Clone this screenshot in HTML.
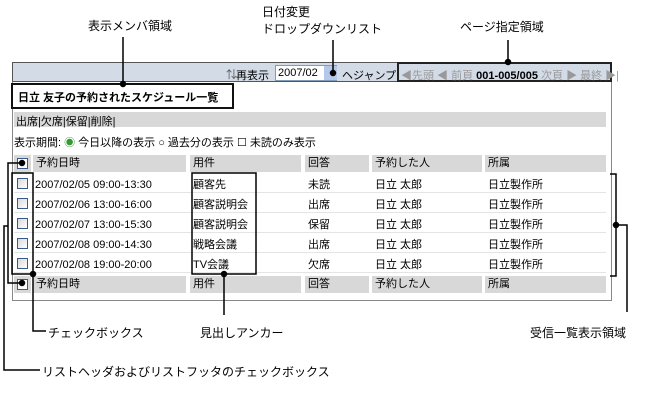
<!DOCTYPE html>
<html><head><meta charset="utf-8"><style>
*{margin:0;padding:0;box-sizing:border-box}
body{width:663px;height:401px;background:#fff;position:relative;overflow:hidden;font-family:"Liberation Sans","Noto Sans CJK JP",sans-serif;font-size:11px;color:#000}
.a{position:absolute;white-space:nowrap}
.g{background:#d8d8d8}
.row{position:absolute;left:14px;width:592px;height:19px;border-bottom:1px solid #e4e4e4}
.cb{position:absolute;width:11px;height:11px;border:1px solid #3a5a8a;background:linear-gradient(135deg,#d8d8d8,#fff)}
.hc{position:absolute;height:17px;background:#d8d8d8;line-height:17px;padding-left:3px}
</style></head><body>
<div class="a" style="left:88px;top:17px;font-size:12px">表示メンバ領域</div>
<div class="a" style="left:262px;top:3px;font-size:12px">日付変更</div>
<div class="a" style="left:262px;top:20px;font-size:12px">ドロップダウンリスト</div>
<div class="a" style="left:460px;top:18px;font-size:12px">ページ指定領域</div>

<div class="a" style="left:12px;top:62px;width:600px;height:239px;border:1px solid #888;border-top:1px solid #555"></div>
<div class="a" style="left:12px;top:62px;width:600px;height:20px;background:#d3dbe6;border:1px solid #555"></div>
<div class="a" style="left:226px;top:66px;color:#555">⇅</div>
<div class="a" style="left:236px;top:67px">再表示</div>
<div class="a" style="left:275px;top:65px;width:62px;height:16px;border:1px solid #7f9db9;background:#fff;padding-left:2px;line-height:14px">2007/02</div>
<div class="a" style="left:324px;top:66px;width:13px;height:14px;background:#b5c8ea"></div>
<div class="a" style="left:342px;top:67px">ヘジャンプ</div>
<div class="a" style="left:397px;top:62px;width:215px;height:20px;border:2px solid #222"></div>
<div class="a" style="left:401px;top:67px;color:#999">◀先頭 ◀ 前頁 <b style="color:#000">001-005/005</b> 次頁 ▶ 最終 ▶|</div>

<div class="a" style="left:11px;top:83px;width:223px;height:26px;border:2px solid #111;background:#fff"></div>
<div class="a" style="left:18px;top:89px;font-weight:bold;font-size:11px">日立 友子の予約されたスケジュール一覧</div>
<div class="a g" style="left:14px;top:112px;width:592px;height:15px"></div>
<div class="a" style="left:16px;top:113px">出席|欠席|保留|削除|</div>
<div class="a" style="left:14px;top:134px">表示期間: <span style="color:#393">◉</span> 今日以降の表示 ○ 過去分の表示 ☐ 未読のみ表示</div>

<div class="hc" style="left:14px;top:155px;width:17px"></div>
<div class="hc" style="left:33px;top:155px;width:153px">予約日時</div>
<div class="hc" style="left:190px;top:155px;width:111px">用件</div>
<div class="hc" style="left:305px;top:155px;width:64px">回答</div>
<div class="hc" style="left:372px;top:155px;width:110px">予約した人</div>
<div class="hc" style="left:485px;top:155px;width:121px">所属</div>
<div class="cb" style="left:17px;top:158px;background:#fff"></div>

<div class="hc" style="left:14px;top:276px;width:17px"></div>
<div class="hc" style="left:33px;top:276px;width:153px">予約日時</div>
<div class="hc" style="left:190px;top:276px;width:111px">用件</div>
<div class="hc" style="left:305px;top:276px;width:64px">回答</div>
<div class="hc" style="left:372px;top:276px;width:110px">予約した人</div>
<div class="hc" style="left:485px;top:276px;width:121px">所属</div>
<div class="cb" style="left:17px;top:279px;background:#fff"></div>

<div class="row" style="top:174px"></div><div class="row" style="top:194px"></div><div class="row" style="top:214px"></div><div class="row" style="top:234px"></div><div class="row" style="top:254px"></div>
<div class="cb" style="left:17px;top:178px"></div><div class="cb" style="left:17px;top:198px"></div><div class="cb" style="left:17px;top:218px"></div><div class="cb" style="left:17px;top:238px"></div><div class="cb" style="left:17px;top:258px"></div>
<div class="a" style="left:35px;top:175px;line-height:20px">2007/02/05 09:00-13:30<br>2007/02/06 13:00-16:00<br>2007/02/07 13:00-15:30<br>2007/02/08 09:00-14:30<br>2007/02/08 19:00-20:00</div>
<div class="a" style="left:193px;top:175px;line-height:20px">顧客先<br>顧客説明会<br>顧客説明会<br>戦略会議<br>TV会議</div>
<div class="a" style="left:308px;top:175px;line-height:20px">未読<br>出席<br>保留<br>出席<br>欠席</div>
<div class="a" style="left:375px;top:175px;line-height:20px">日立 太郎<br>日立 太郎<br>日立 太郎<br>日立 太郎<br>日立 太郎</div>
<div class="a" style="left:488px;top:175px;line-height:20px">日立製作所<br>日立製作所<br>日立製作所<br>日立製作所<br>日立製作所</div>

<div class="a" style="left:48px;top:324px;font-size:12px">チェックボックス</div>
<div class="a" style="left:200px;top:324px;font-size:12px">見出しアンカー</div>
<div class="a" style="left:530px;top:324px;font-size:12px">受信一覧表示領域</div>
<div class="a" style="left:42px;top:363px;font-size:12px">リストヘッダおよびリストフッタのチェックボックス</div>

<svg class="a" style="left:0;top:0" width="663" height="401" fill="none" stroke="#000" stroke-width="1.5">
<line x1="123" y1="37" x2="123" y2="84"/><circle cx="123" cy="84" r="2.5" fill="#000"/>
<line x1="333" y1="40" x2="333" y2="73"/><circle cx="333" cy="73" r="2.5" fill="#000"/>
<line x1="508" y1="40" x2="508" y2="62"/><circle cx="508" cy="62" r="2.5" fill="#000"/>
<rect x="12" y="173" width="21" height="101"/>
<rect x="192" y="173" width="64" height="101"/>
<circle cx="33" cy="274" r="2.5" fill="#000"/><polyline points="33,274 33,331 46,331"/>
<circle cx="224" cy="274" r="2.5" fill="#000"/><line x1="224" y1="274" x2="224" y2="315"/>
<circle cx="22" cy="163" r="2.5" fill="#000"/><polyline points="22,163 8,163 8,283 22,283"/><circle cx="22" cy="283" r="2.5" fill="#000"/>
<polyline points="8,226 4,226 4,370 40,370"/>
<polyline points="610,174 616,174 616,276 610,276"/>
<circle cx="616" cy="225" r="2.5" fill="#000"/><polyline points="616,225 627,225 627,312"/>
</svg>
</body></html>
